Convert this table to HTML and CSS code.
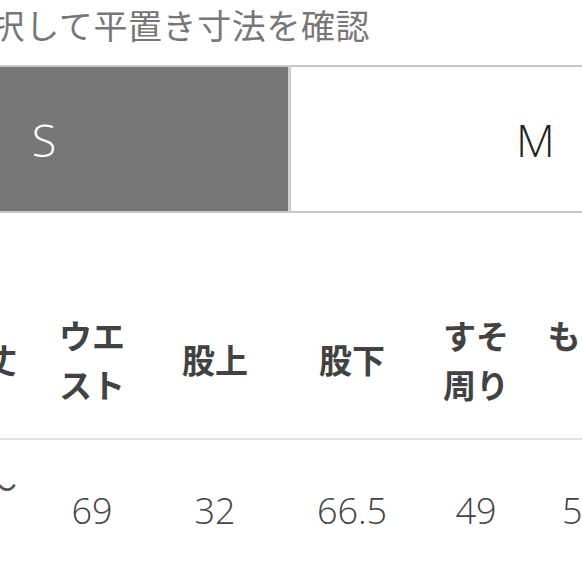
FILE: index.html
```html
<!DOCTYPE html>
<html lang="ja">
<head>
<meta charset="utf-8">
<title>サイズ</title>
<link rel="stylesheet" href="styles.css">
</head>
<body>
<div class="page">
  <p class="lead">選択して平置き寸法を確認</p>
  <div class="tabs">
    <div class="tab tab-active">S</div>
    <div class="tab">M</div>
  </div>
  <div class="table">
    <div class="row row-head">
      <div class="cell cell-first">総丈</div>
      <div class="cell">ウエ<br>スト</div>
      <div class="cell">股上</div>
      <div class="cell">股下</div>
      <div class="cell">すそ<br>周り</div>
      <div class="cell">もも周<br>り</div>
    </div>
    <div class="row row-data">
      <div class="cell cell-first"><span class="wave">〜</span><br>&nbsp;</div>
      <div class="cell">69</div>
      <div class="cell">32</div>
      <div class="cell">66.5</div>
      <div class="cell">49</div>
      <div class="cell">55.5</div>
    </div>
  </div>
</div>
</body>
</html>
```

FILE: styles.css
```css
html, body {
  margin: 0;
  padding: 0;
  background: #ffffff;
  overflow: hidden;
}

.page {
  width: 582px;
  height: 582px;
  overflow: hidden;
  font-family: "Noto Sans CJK JP", "Noto Sans", sans-serif;
}

.lead {
  margin: 0 0 0 -44px;
  height: 48px;
  font-size: 34px;
  letter-spacing: 0.6px;
  line-height: 50px;
  color: #777777;
  white-space: nowrap;
}

.tabs {
  display: flex;
  margin: 17px 0 0 -202px;
  width: 984px;
}

.tab {
  box-sizing: border-box;
  width: 492px;
  height: 148px;
  border: 2px solid #c8c8c8;
  display: flex;
  align-items: center;
  justify-content: center;
  font-family: "Open Sans", "Noto Sans", sans-serif;
  font-weight: 300;
  font-size: 45px;
  color: #222222;
  background: #ffffff;
}

.tab-active {
  background: #777777;
  color: #ffffff;
  border-right-color: #d0d0d0;
}

.tab + .tab {
  border-left-width: 1px;
}

.table {
  margin-left: -100px;
  width: 770px;
}

.row {
  display: grid;
  grid-template-columns: 130px 124px 122px 152px 96px 146px;
  align-items: center;
  text-align: center;
}

.row-head {
  margin-top: 68px;
  height: 157px;
  border-bottom: 2px solid #e2e2e2;
  font-size: 33px;
  line-height: 49px;
  font-weight: 700;
  color: #424242;
}

.row-data {
  height: 140px;
  font-family: "Open Sans", "Noto Sans", sans-serif;
  font-weight: 300;
  font-size: 36px;
  line-height: 49px;
  color: #444444;
}

.cell-first {
  text-align: right;
  padding-right: 13px;
}

.wave {
  font-family: "Noto Sans CJK JP", sans-serif;
  font-size: 33px;
  font-weight: 400;
  color: #555555;
}
```
